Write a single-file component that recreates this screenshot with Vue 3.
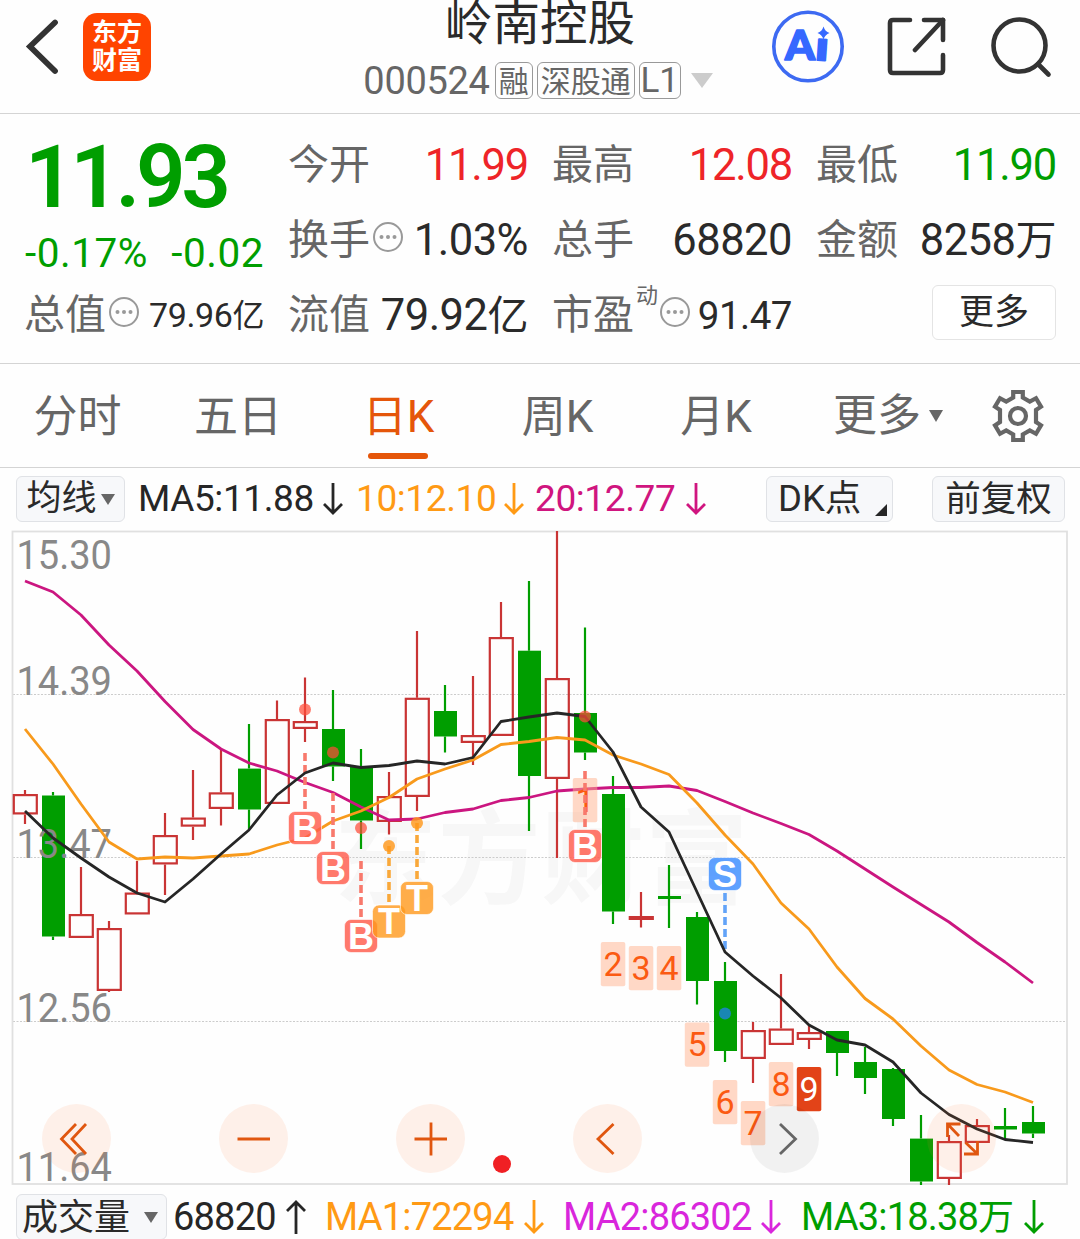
<template>
  <div class="stock-page">
    <header class="top-bar">
      <div class="top-left">
        <svg class="back-icon" width="40" height="64" viewBox="0 0 40 64">
          <path d="M35 9.500 L10 33.500 L35 58" />
        </svg>
        <div class="brand-logo">
          <span>东方</span>
          <span>财富</span>
        </div>
      </div>
      <div class="top-title">
        <h1 class="stock-name">岭南控股</h1>
        <div class="stock-meta">
          <span class="stock-code">000524</span>
          <span class="tag">融</span>
          <span class="tag tag-wide">深股通</span>
          <span class="tag tag-level">L1</span>
          <i class="caret caret-light"></i>
        </div>
      </div>
      <div class="top-actions">
        <svg width="74" height="74" viewBox="0 0 74 74">
          <circle class="ai-ring" cx="37" cy="36.500" r="34.200" />
          <text class="ai-text" x="14" y="49.500" textLength="30" lengthAdjust="spacingAndGlyphs">A</text>
          <text class="ai-text" x="44" y="50.500" textLength="14" lengthAdjust="spacingAndGlyphs" transform="rotate(4 51 40)">ı</text>
          <path class="ai-star" d="M52.500 16.500 Q54 21.500 58.500 23 Q54 24.500 52.500 29.500 Q51 24.500 46.500 23 Q51 21.500 52.500 16.500 Z" />
        </svg>
        <svg class="line-icon share-icon" width="60" height="60" viewBox="0 0 60 60">
          <path d="M23 3 H6 Q3 3 3 6 V53 Q3 56 6 56 H53 Q56 56 56 53 V38" />
          <path d="M37 3 H56 V23" />
          <path d="M56 3 L28 33" />
        </svg>
        <svg class="line-icon" width="62" height="62" viewBox="0 0 62 62">
          <circle cx="29.500" cy="28.500" r="26" />
          <path d="M48 47 L58.500 57.500" />
        </svg>
      </div>
    </header>

    <section class="quote-panel">
      <div class="quote-price">
        <div class="price">11.93</div>
        <div class="change"><span>-0.17%</span><span>-0.02</span></div>
      </div>
      <div v-for="q in quotes" :key="q.label" class="quote-cell">
        <span class="quote-label">{{ q.label }}</span>
        <sup v-if="q.sup" class="quote-sup">{{ q.sup }}</sup>
        <svg v-if="q.info" class="info-icon" width="30" height="30" viewBox="0 0 30 30">
          <circle class="info-ring" cx="15" cy="15" r="14" />
          <circle cx="8.500" cy="15" r="2" />
          <circle cx="15" cy="15" r="2" />
          <circle cx="21.500" cy="15" r="2" />
        </svg>
        <span class="quote-value" :class="[q.color, q.size]">{{ q.value }}<em v-if="q.unit">{{ q.unit }}</em></span>
      </div>
      <div class="quote-cell quote-more">
        <button class="more-btn">更多</button>
      </div>
    </section>

    <nav class="tabs">
      <a v-for="tab in tabs" :key="tab" class="tab" :class="{ active: tab === activeTab }" @click="activeTab = tab">{{ tab }}</a>
      <a class="tab tab-more">更多<i class="caret caret-small"></i></a>
      <svg class="gear-icon" width="56" height="56" viewBox="0 0 56 56">
        <path d="M23.200 4 H32.800 V9.500 L39.800 13.500 L46 10.200 L51 18.700 L46 22 V34 L51 37.300 L46 45.800 L39.800 42.500 L32.800 46.500 V52 H23.200 V46.500 L16.200 42.500 L10 45.800 L5 37.300 L10 34 V22 L5 18.700 L10 10.200 L16.200 13.500 L23.200 9.500 Z" />
        <circle cx="28" cy="28" r="8" />
      </svg>
    </nav>

    <div class="indicator-row">
      <button class="chip chip-ma">均线<i class="caret"></i></button>
      <span v-for="m in maList" :key="m.text" class="indicator" :class="m.color">
        {{ m.text }}
        <svg class="arrow" width="20" height="34" viewBox="0 0 20 34"><path d="M10 1 V31 M1 22 L10 31 L19 22" /></svg>
      </span>
      <button class="chip chip-dk">DK点<i class="corner"></i></button>
      <button class="chip chip-fq">前复权</button>
    </div>

    <div class="chart-box">
      <svg class="chart" width="1080" height="658" viewBox="0 529 1080 658">
        <text class="watermark" x="334" y="896" textLength="414">东方财富</text>
        <path v-for="y in gridLines" :key="y" class="grid-line" :d="`M13 ${y} H1067`" />
        <rect class="frame" x="12.500" y="531.500" width="1054.500" height="652.500" />

        <g v-for="(c, i) in candles" :key="i" :class="c[0] === 'r' ? 'candle-up' : 'candle-down'">
          <path class="wick" :d="`M${cx(i)} ${c[1]} V${c[2]} M${cx(i)} ${c[3]} V${c[4]}`" />
          <rect
              v-if="c[0] === 'r'"
              :x="cx(i) - 11.200"
              :y="c[2] + 1.100"
              width="23"
              :height="c[3] - c[2] - 2.200"
          />
          <rect v-else :x="cx(i) - 11" :y="c[2]" width="23" :height="c[3] - c[2]" />
        </g>

        <text
            v-for="p in priceLabels"
            :key="p.text"
            class="price-label"
            x="16.500"
            :y="p.y"
            textLength="95.500"
            lengthAdjust="spacingAndGlyphs"
        >{{ p.text }}</text>

        <polyline class="ma-line ma20" :points="toPoints(ma20)" />
        <polyline class="ma-line ma10" :points="toPoints(ma10)" />

        <g v-for="n in counts" :key="n.n">
          <rect class="count-box" :class="{ solid: n.n === 9 }" :x="cx(n.i) - 12.200" :y="n.y" width="24.500" height="44.300" rx="2" />
          <text class="count-text" :class="{ solid: n.n === 9 }" :x="cx(n.i)" :y="n.y + 33.800">{{ n.n }}</text>
        </g>

        <g v-for="s in signals" :key="s.i" :class="`signal-${s.type}`">
          <path class="signal-line" :d="`M${cx(s.i)} ${s.from} V${s.to}`" />
        </g>
        <polyline class="ma-line ma5" :points="toPoints(ma5)" />
        <g v-for="s in signals" :key="s.i" :class="`signal-${s.type}`">
          <circle class="signal-dot" :cx="cx(s.i)" :cy="s.dot" r="6" />
          <rect class="signal-badge" :x="cx(s.i) - 16.500" :y="s.badge - 16.500" width="33" height="33" rx="6.500" />
          <text class="signal-text" :x="cx(s.i)" :y="s.badge + 12.500">{{ s.type }}</text>
        </g>
        <circle class="live-dot" cx="502" cy="1164" r="9" />
      </svg>

      <div class="chart-tools">
        <button v-for="t in tools" :key="t.name" class="tool" :class="t.name">
          <svg width="40" height="40" viewBox="0 0 40 40"><path :d="t.d" /></svg>
        </button>
      </div>
    </div>

    <div class="volume-row">
      <button class="chip chip-vol">成交量<i class="caret"></i></button>
      <span v-for="v in volumeList" :key="v.text" class="indicator" :class="v.color">
        <span>{{ v.text }}<em v-if="v.unit">{{ v.unit }}</em></span>
        <svg class="arrow" width="20" height="36" viewBox="0 0 20 36">
          <path v-if="v.up" d="M10 35 V3 M1 12 L10 3 L19 12" />
          <path v-else d="M10 1 V33 M1 24 L10 33 L19 24" />
        </svg>
      </span>
    </div>
  </div>
</template>

<script setup>

import {ref} from "vue";

const quotes = [
  {label: '今开', value: '11.99', color: 'red', size: 'tight'},
  {label: '最高', value: '12.08', color: 'red', size: 'tight'},
  {label: '最低', value: '11.90', color: 'green', size: 'tight'},
  {label: '换手', value: '1.03%', info: true},
  {label: '总手', value: '68820'},
  {label: '金额', value: '8258', unit: '万'},
  {label: '总值', value: '79.96', unit: '亿', info: true, size: 'small'},
  {label: '流值', value: '79.92', unit: '亿'},
  {label: '市盈', value: '91.47', sup: '动', info: true, size: 'medium'},
]

const tabs = ['分时', '五日', '日K', '周K', '月K']
const activeTab = ref('日K')

const maList = [
  {text: 'MA5:11.88', color: 'dark w-ma5'},
  {text: '10:12.10', color: 'orange w-ma10'},
  {text: '20:12.77', color: 'pink w-ma20'},
]

const volumeList = [
  {text: '68820', color: 'dark w-v0', up: true},
  {text: 'MA1:72294', color: 'orange w-v1'},
  {text: 'MA2:86302', color: 'violet w-v2'},
  {text: 'MA3:18.38', unit: '万', color: 'green w-v3'},
]

const gridLines = [694.5, 857.5, 1021.5]

const priceLabels = [
  {text: '15.30', y: 569},
  {text: '14.39', y: 695},
  {text: '13.47', y: 858},
  {text: '12.56', y: 1022},
  {text: '11.64', y: 1181},
]

// direction, high, body top, body bottom, low
const candles = [
  ['r', 790, 794, 814.5, 824], ['g', 792, 795.5, 936.5, 940], ['r', 867, 914, 938, 938],
  ['r', 921, 928, 991, 992], ['r', 861, 892.5, 914.5, 914.5], ['r', 813, 835, 864.5, 895],
  ['r', 770, 817.5, 826.7, 840], ['r', 749, 792.3, 809, 825.5], ['g', 724, 768.6, 809.5, 829],
  ['r', 700.5, 719, 804, 804], ['r', 677.5, 721, 729, 742], ['g', 690, 729, 766.5, 781],
  ['g', 749, 766, 820.5, 849], ['r', 772, 796, 822, 834.5], ['r', 631, 697.7, 797, 811],
  ['g', 685, 711, 736.5, 752.5], ['r', 676, 735, 743, 765], ['r', 602, 637, 736, 736],
  ['g', 581, 650.7, 776, 831], ['r', 531, 678, 779, 858], ['g', 627.5, 713, 752.5, 760],
  ['g', 776, 794, 911.5, 924], ['r', 892, 916, 920, 927.5], ['g', 865, 896, 899, 928],
  ['g', 912, 917, 981, 1004.5], ['g', 962, 981, 1051, 1062], ['r', 1022, 1030, 1059, 1083],
  ['r', 974, 1028.5, 1045, 1045], ['r', 1025, 1032, 1040, 1049], ['g', 1031, 1031, 1053, 1076],
  ['g', 1047, 1062, 1078, 1094], ['g', 1068, 1069, 1119, 1126], ['g', 1115, 1138.6, 1181.5, 1185],
  ['r', 1135, 1141, 1179, 1185], ['r', 1119, 1125, 1143, 1143], ['g', 1108, 1126, 1129.5, 1138],
  ['g', 1106, 1122, 1133.5, 1138],
]

const ma5 = [811, 838, 858, 877, 893, 902, 879, 854, 830, 795, 773, 763, 767.5, 765.5, 761, 764, 757.5, 721.5, 717,
  713, 716.5, 752, 807, 832, 892, 952, 976, 998, 1025, 1040, 1045, 1062, 1093, 1114.5, 1129, 1139.5, 1142.5]
const ma10 = [729, 764, 804, 842, 859, 857, 858, 856, 854, 845, 838, 821, 811, 797.5, 779, 769, 760, 744.5, 741.5,
  737.5, 740, 755, 764, 774.5, 803, 835, 864, 903, 929, 967, 998.5, 1019, 1046, 1070, 1084.5, 1092, 1102.5]
const ma20 = [581, 592, 615, 645, 671, 701.5, 729.5, 749, 763, 771, 782.5, 792.5, 807, 820, 819, 812.5, 809, 800.5,
  797.5, 791, 789, 787.5, 787.5, 786, 790.5, 801.5, 813, 823.5, 834.5, 851, 869, 887, 904.5, 922, 942.5, 962, 983]

const signals = [
  {type: 'B', i: 10, dot: 709.5, from: 753, to: 812, badge: 828},
  {type: 'B', i: 11, dot: 752.5, from: 793, to: 851, badge: 868},
  {type: 'B', i: 12, dot: 828, from: 861, to: 919, badge: 936},
  {type: 'T', i: 13, dot: 846, from: 846, to: 904, badge: 921.5},
  {type: 'T', i: 14, dot: 823, from: 823, to: 881, badge: 898},
  {type: 'B', i: 20, dot: 716.5, from: 771, to: 829, badge: 846},
  {type: 'S', i: 25, dot: 1013.5, from: 893, to: 951, badge: 874},
]

const counts = [
  {n: 1, i: 20, y: 778}, {n: 2, i: 21, y: 942}, {n: 3, i: 22, y: 946}, {n: 4, i: 23, y: 946},
  {n: 5, i: 24, y: 1022.5}, {n: 6, i: 25, y: 1080}, {n: 7, i: 26, y: 1101}, {n: 8, i: 27, y: 1062},
  {n: 9, i: 28, y: 1067},
]

const tools = [
  {name: 'first', d: 'M19 5 L4.500 20 L19 35 M29 5 L15 20 L29 35'},
  {name: 'zoom-out', d: 'M3.500 20 H36'},
  {name: 'zoom-in', d: 'M3.500 20 H36 M20 3.500 V36.500'},
  {name: 'prev', d: 'M25.500 5 L10 20 L25.500 35'},
  {name: 'next', d: 'M15 5 L30.500 20 L15 35'},
  {name: 'expand', d: 'M5.500 18 V5 H18.500 M5.500 5 L17 17 M22 35 H35.500 V22 M35.500 35 L23.500 23.500'},
]

const cx = (i) => 25 + i * 28

const toPoints = (list) => list.map((y, i) => `${cx(i)},${y}`).join(' ')

</script>

<style>
body {
  margin: 0;
  background: #fff;
}
</style>

<style scoped>

.stock-page {
  width: 1080px;
  height: 1239px;
  overflow: hidden;
  background: #fefefe;
  font-family: Roboto, "Noto Sans CJK SC", sans-serif;
  color: #2a2a2a;
}

button {
  font: inherit;
  color: inherit;
  padding: 0;
  margin: 0;
  box-sizing: border-box;
}

em {
  font-style: normal;
  line-height: 0;
}

.red { color: #ee2428; }
.green { color: #009e00; }
.dark { color: #262626; }
.orange { color: #ff9a14; }
.pink { color: #d0157f; }
.violet { color: #d926dc; }

.caret {
  display: inline-block;
  border: 7.5px solid transparent;
  border-top: 11px solid #666;
  border-bottom: 0;
}

.caret-light {
  border-width: 11px;
  border-top: 15px solid #ccc;
  border-bottom: 0;
  margin-left: 6px;
}

/* header */
.top-bar {
  height: 114px;
  box-sizing: border-box;
  border-bottom: 1px solid #d4d4d4;
  display: grid;
  grid-template-columns: 320px 440px 320px;
}

.top-left {
  display: flex;
  align-items: flex-start;
  padding: 13px 0 0 20px;
  gap: 23px;
}

.back-icon path {
  fill: none;
  stroke: #333;
  stroke-width: 5.8;
  stroke-linecap: round;
}

.brand-logo {
  width: 68px;
  height: 68px;
  border-radius: 14px;
  background: #ff4400;
  color: #fff;
  display: flex;
  flex-direction: column;
  align-items: center;
  justify-content: center;
  font-size: 25px;
  line-height: 28.5px;
  font-weight: 700;
}

.top-title {
  display: flex;
  flex-direction: column;
  align-items: center;
}

.stock-name {
  margin: 0;
  font-size: 47.5px;
  font-weight: 400;
  line-height: 48px;
  height: 62px;
}

.stock-meta {
  display: flex;
  align-items: center;
  height: 37px;
  color: #666;
  margin-left: -4px;
}

.stock-code {
  font-size: 38px;
  letter-spacing: -.3px;
  margin-right: 5px;
}

.tag {
  box-sizing: border-box;
  width: 38px;
  height: 37px;
  line-height: 37px;
  font-size: 30px;
  text-align: center;
  border: 1.5px solid #999;
  border-radius: 6px;
  margin-right: 4px;
}

.tag-wide { width: 98px; }
.tag-level { width: 42px; font-size: 35px; line-height: 35px; }

.top-actions {
  display: flex;
  align-items: flex-start;
  padding-top: 10px;
  padding-left: 11px;
}

.line-icon {
  margin: 7px 0 0 43px;
  fill: none;
  stroke: #333;
  stroke-width: 4.6;
  stroke-linecap: round;
  stroke-linejoin: round;
}

.share-icon {
  margin-left: 42px;
}

.ai-ring {
  fill: none;
  stroke: #3d6af2;
  stroke-width: 3.6;
}

.ai-text {
  font-family: Lato, sans-serif;
  font-size: 41px;
  font-weight: 900;
  fill: #3568ff;
  stroke: #3568ff;
  stroke-width: 1.6;
  stroke-linejoin: round;
}

.ai-star {
  fill: #3568ff;
}

/* quotes */
.quote-panel {
  height: 250px;
  box-sizing: border-box;
  border-bottom: 1px solid #d4d4d4;
  padding: 13px 24px 0 25px;
  display: grid;
  grid-template-columns: repeat(4, 239px);
  grid-template-rows: repeat(3, 75px);
  column-gap: 25px;
}

.quote-price {
  grid-row: 1 / 3;
  color: #009e00;
}

.price {
  font-size: 87px;
  font-weight: 600;
  line-height: 100px;
  letter-spacing: -4.4px;
}

.change {
  display: flex;
  justify-content: space-between;
  font-size: 40.5px;
  line-height: 50px;
  padding-top: 1px;
  letter-spacing: .5px;
}

.quote-cell {
  display: flex;
  align-items: center;
  white-space: nowrap;
  line-height: 75px;
}

.quote-label {
  font-size: 41px;
  color: #666;
  padding-top: 2px;
  margin-left: -1px;
}

.quote-value {
  margin-left: auto;
  font-size: 43.5px;
  letter-spacing: -.5px;
  padding-top: 1px;
}

.quote-value em {
  font-size: 41px;
}

.quote-value.tight { letter-spacing: -1.2px; }
.quote-value.small { font-size: 34px; letter-spacing: -.4px; }
.quote-value.small em { font-size: 32px; }
.quote-value.medium { font-size: 38.5px; }

.quote-sup {
  font-size: 22px;
  line-height: 22px;
  color: #666;
  align-self: flex-start;
  margin-top: 8px;
  margin-left: 2px;
}

.info-icon {
  margin-left: 3px;
  margin-bottom: 6px;
  fill: #999;
}

.quote-sup + .info-icon {
  margin-left: 2px;
}

.info-ring {
  fill: none;
  stroke: #999;
  stroke-width: 2;
}

.quote-more {
  justify-content: flex-end;
}

.more-btn {
  width: 124px;
  height: 55px;
  margin-bottom: 4px;
  border: 1.5px solid #e4e4e4;
  border-radius: 6px;
  background: #fff;
  font-size: 35px;
  line-height: 52px;
}

/* tabs */
.tabs {
  height: 104px;
  box-sizing: border-box;
  border-bottom: 1px solid #d4d4d4;
  display: grid;
  grid-template-columns: 159px 162px 159px 159px 158px 186px 70px;
  align-items: center;
  color: #666;
  font-size: 44px;
}

.tab {
  position: relative;
  box-sizing: border-box;
  height: 103px;
  line-height: 106px;
  padding-right: 4px;
  text-align: center;
}

.tab.active {
  color: #e5560a;
}

.tab.active::after {
  content: "";
  position: absolute;
  left: 50%;
  bottom: 8px;
  width: 60px;
  height: 6px;
  margin-left: -33px;
  border-radius: 3px;
  background: #e5560a;
}

.tab-more {
  display: flex;
  align-items: center;
  justify-content: center;
}

.caret-small {
  margin-left: 8px;
  border-top-width: 12px;
}

.gear-icon {
  margin-left: 7px;
  fill: none;
  stroke: #666;
  stroke-width: 4.2;
}

/* indicators */
.indicator-row,
.volume-row {
  display: flex;
  align-items: center;
}

.indicator-row {
  height: 61px;
  padding-left: 16px;
  font-size: 37px;
  letter-spacing: -.4px;
}

.chip {
  height: 46px;
  border: 1.5px solid #e0e2e6;
  border-radius: 6px;
  background: #f7f8fa;
  display: flex;
  align-items: center;
  justify-content: center;
  font-size: 35px;
  line-height: 46px;
  letter-spacing: 0;
  padding-top: 1px;
  flex: none;
  white-space: nowrap;
}

.chip-ma { width: 109px; gap: 4px; margin-right: 13px; }
.chip-dk { width: 127px; position: relative; justify-content: flex-start; padding-left: 11px; margin-left: auto; font-size: 36.5px; }
.chip-fq { width: 133px; margin: 0 15px 0 39px; font-size: 35.5px; }

.corner {
  position: absolute;
  right: 5px;
  bottom: 5px;
  border: 6px solid #262626;
  border-top-color: transparent;
  border-left-color: transparent;
}

.indicator {
  display: flex;
  align-items: center;
  justify-content: space-between;
  white-space: nowrap;
  flex: none;
}

.arrow {
  fill: none;
  stroke: currentColor;
  stroke-width: 2.8;
}

.w-ma5 { width: 205px; margin-right: 13px; }
.w-ma10 { width: 168px; margin-right: 11px; }
.w-ma20 { width: 171px; }

/* chart */
.chart-box {
  position: relative;
  height: 658px;
}

.chart {
  display: block;
}

.frame {
  fill: none;
  stroke: #e0e0e0;
  stroke-width: 1.8;
}

.grid-line {
  stroke: #ccc;
  stroke-width: 1;
  stroke-dasharray: 2 1.5;
}

.watermark {
  font-family: "Noto Sans CJK SC", sans-serif;
  font-weight: 700;
  font-size: 103px;
  fill: #f7f7f7;
}

.price-label {
  font-size: 40.5px;
  fill: #888;
}

.wick {
  stroke-width: 2.2;
}

.candle-up .wick,
.candle-up rect {
  fill: none;
  stroke: #c93434;
  stroke-width: 2.2;
}

.candle-down .wick { stroke: #009e00; }
.candle-down rect { fill: #009e00; }

.ma-line {
  fill: none;
  stroke-width: 2.8;
  stroke-linejoin: round;
}

.ma5 { stroke: #262626; }
.ma10 { stroke: #f89a1c; }
.ma20 { stroke: #cb1680; }

.count-box { fill: rgba(255, 178, 142, .5); }
.count-box.solid { fill: #e24318; }

.count-text {
  font-size: 34px;
  fill: #fb5a12;
  text-anchor: middle;
}

.count-text.solid { fill: #fff; }

.signal-line {
  stroke-width: 3.6;
  stroke-dasharray: 8 4;
}

.signal-B .signal-line { stroke: #f8796c; }
.signal-T .signal-line { stroke: #f9a83a; }
.signal-S .signal-line { stroke: #62a3f8; }

.signal-B .signal-dot { fill: rgba(255, 75, 55, .72); }
.signal-T .signal-dot { fill: rgba(255, 153, 28, .82); }
.signal-S .signal-dot { fill: #1987b4; }

.signal-badge {
  stroke: rgba(255, 255, 255, .6);
  stroke-width: 1;
}

.signal-B .signal-badge { fill: rgba(255, 92, 76, .82); }
.signal-T .signal-badge { fill: rgba(255, 153, 28, .8); }
.signal-S .signal-badge { fill: rgba(66, 145, 255, .85); }

.signal-text {
  font-family: "Liberation Sans", sans-serif;
  font-size: 36px;
  font-weight: 700;
  fill: #fff;
  text-anchor: middle;
}

.live-dot {
  fill: #f02024;
}

.chart-tools {
  position: absolute;
  left: 42px;
  top: 575px;
  display: flex;
  gap: 108px;
}

.tool {
  width: 69px;
  height: 69px;
  border: 0;
  border-radius: 50%;
  background: rgba(255, 120, 50, .1);
  display: flex;
  align-items: center;
  justify-content: center;
}

.tool path {
  fill: none;
  stroke: #e0560f;
  stroke-width: 2.8;
}

.tool.next {
  background: rgba(0, 0, 0, .05);
}

.tool.next path {
  stroke: #666;
}

/* volume */
.volume-row {
  height: 60px;
  padding-left: 16px;
  font-size: 38px;
  line-height: 46px;
  letter-spacing: -.8px;
}

.chip-vol { width: 151px; gap: 14px; margin-right: 6px; padding-right: 3px; font-size: 36px; }

.w-v0 { width: 133px; margin-right: 19px; }
.w-v1 { width: 219px; margin-right: 19px; }
.w-v2 { width: 218px; margin-right: 20px; }
.w-v3 { width: 243px; }
.w-v3 em { font-size: 36px; }

</style>
